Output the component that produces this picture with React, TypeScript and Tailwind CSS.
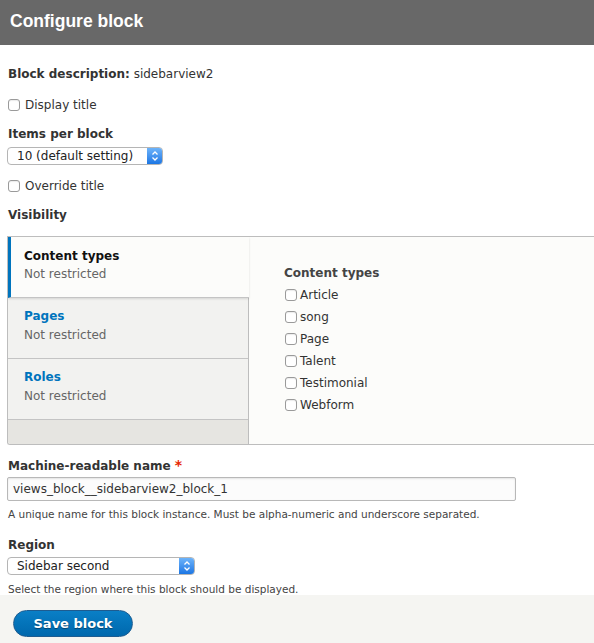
import React from "react";

const font = { fontFamily: '"DejaVu Sans", "Noto Sans", sans-serif' };

function Box() {
  return (
    <span className="inline-block w-[12px] h-[12px] rounded-[3px] border border-[#9a9a9a] bg-white shadow-[inset_0_1px_1px_rgba(0,0,0,0.08)] shrink-0" />
  );
}

function Check({ label, className = "" }: { label: string; className?: string }) {
  return (
    <div className={"flex items-center h-[16px] " + className}>
      <Box />
      <span className="ml-[5px] text-[12px] leading-[16px] text-[#333]">{label}</span>
    </div>
  );
}

function Select({ text, width }: { text: string; width: string }) {
  return (
    <div className={"flex h-[18px] rounded-[4px] border border-[#b5b5b5] bg-white overflow-hidden " + width}>
      <div className="flex-1 pl-[9px] text-[12px] leading-[16px] text-[#222]">{text}</div>
      <div className="w-[15px] bg-gradient-to-b from-[#6cb3fa] to-[#1a76e3] flex items-center justify-center">
        <svg width="8" height="12" viewBox="0 0 8 12" fill="none" stroke="white" strokeWidth="1.3">
          <path d="M1.5 4.5 L4 2 L6.5 4.5" />
          <path d="M1.5 7.5 L4 10 L6.5 7.5" />
        </svg>
      </div>
    </div>
  );
}

export default function App() {
  return (
    <div style={font} className="w-[594px] h-[643px] bg-white overflow-hidden text-[#333]">
      <div className="h-[45px] bg-[#686868] flex items-center pl-[10px]">
        <h1 className="text-white font-bold text-[17.5px] leading-none font-['Liberation_Sans',sans-serif] -mt-[2px]">Configure block</h1>
      </div>
      <div className="pl-[8px]">
        <div className="mt-[21px] h-[16px] text-[12px] leading-[16px]">
          <span className="font-bold">Block description:</span> sidebarview2
        </div>
        <Check label="Display title" className="mt-[15px]" />
        <div className="mt-[13px] h-[16px] text-[12px] leading-[16px] font-bold">Items per block</div>
        <div className="mt-[5px] -ml-[1px]">
          <Select text="10 (default setting)" width="w-[156px]" />
        </div>
        <Check label="Override title" className="mt-[13px]" />
        <div className="mt-[13px] h-[16px] text-[12px] leading-[16px] font-bold">Visibility</div>
      </div>
      <div className="mt-[13px] ml-[7px] h-[209px] flex border-t border-l border-b border-[#bdbdbd] rounded-bl-[3px] overflow-hidden">
        <div className="w-[241px] flex flex-col bg-[#e6e5e1] border-r border-[#bdbdbd]">
          <div className="h-[61px] bg-[#fcfcfa] -mr-[1px] border-l-[3px] border-[#0074bd] border-b border-b-[#c4c4c4] shadow-[0_1px_2px_rgba(0,0,0,0.12)] pl-[13px] pt-[10px] relative z-10">
            <div className="text-[12px] leading-[18px] font-bold text-[#111]">Content types</div>
            <div className="text-[12px] leading-[18px] text-[#666]">Not restricted</div>
          </div>
          <div className="h-[61px] bg-[#f2f2f0] border-b border-[#c4c4c4] pl-[16px] pt-[9px]">
            <div className="text-[12px] leading-[18px] font-bold text-[#0074bd]">Pages</div>
            <div className="text-[12px] leading-[20px] text-[#666]">Not restricted</div>
          </div>
          <div className="h-[61px] bg-[#f2f2f0] border-b border-[#c4c4c4] pl-[16px] pt-[9px]">
            <div className="text-[12px] leading-[18px] font-bold text-[#0074bd]">Roles</div>
            <div className="text-[12px] leading-[20px] text-[#666]">Not restricted</div>
          </div>
          <div className="flex-1" />
        </div>
        <div className="flex-1 bg-[#fcfcfa] pl-[35px] pt-[27px]">
          <div className="text-[12px] leading-[18px] font-bold text-[#444]">Content types</div>
          <div className="flex flex-col gap-[6px] mt-[5px] ml-[1px]">
            {["Article", "song", "Page", "Talent", "Testimonial", "Webform"].map((l) => (
              <div key={l} className="flex items-center h-[16px]">
                <Box />
                <span className="ml-[3px] text-[12px] leading-[16px] text-[#333]">{l}</span>
              </div>
            ))}
          </div>
        </div>
      </div>
      <div className="pl-[8px]">
        <div className="mt-[12px] h-[16px] text-[12px] leading-[16px] font-bold">
          Machine-readable name <span className="text-[#e62600] text-[14px]">*</span>
        </div>
        <div className="mt-[4px] -ml-[1px] w-[509px] h-[24px] border border-[#b8b8b8] rounded-[2px] bg-[#fcfcfc] shadow-[inset_0_1px_2px_rgba(0,0,0,0.1)] pl-[5px] flex items-center text-[12px] text-[#333]">
          views_block__sidebarview2_block_1
        </div>
        <div className="mt-[6px] h-[14px] text-[10.5px] leading-[14px] text-[#444]">
          A unique name for this block instance. Must be alpha-numeric and underscore separated.
        </div>
        <div className="mt-[16px] h-[16px] text-[12px] leading-[16px] font-bold">Region</div>
        <div className="mt-[4px] -ml-[1px]">
          <Select text="Sidebar second" width="w-[188px]" />
        </div>
        <div className="mt-[7px] h-[13px] text-[10.5px] leading-[14px] text-[#444] overflow-visible">
          Select the region where this block should be displayed.
        </div>
      </div>
      <div className="h-[49px] bg-[#f5f5f2] pt-[15px] pl-[13px] relative">
        <button className="w-[120px] h-[27px] rounded-full border border-[#1e5c90] bg-gradient-to-b from-[#0a7fc6] to-[#0068ad] text-white font-bold text-[13px] [text-shadow:0_1px_1px_rgba(0,0,0,0.4)]">
          Save block
        </button>
      </div>
    </div>
  );
}
